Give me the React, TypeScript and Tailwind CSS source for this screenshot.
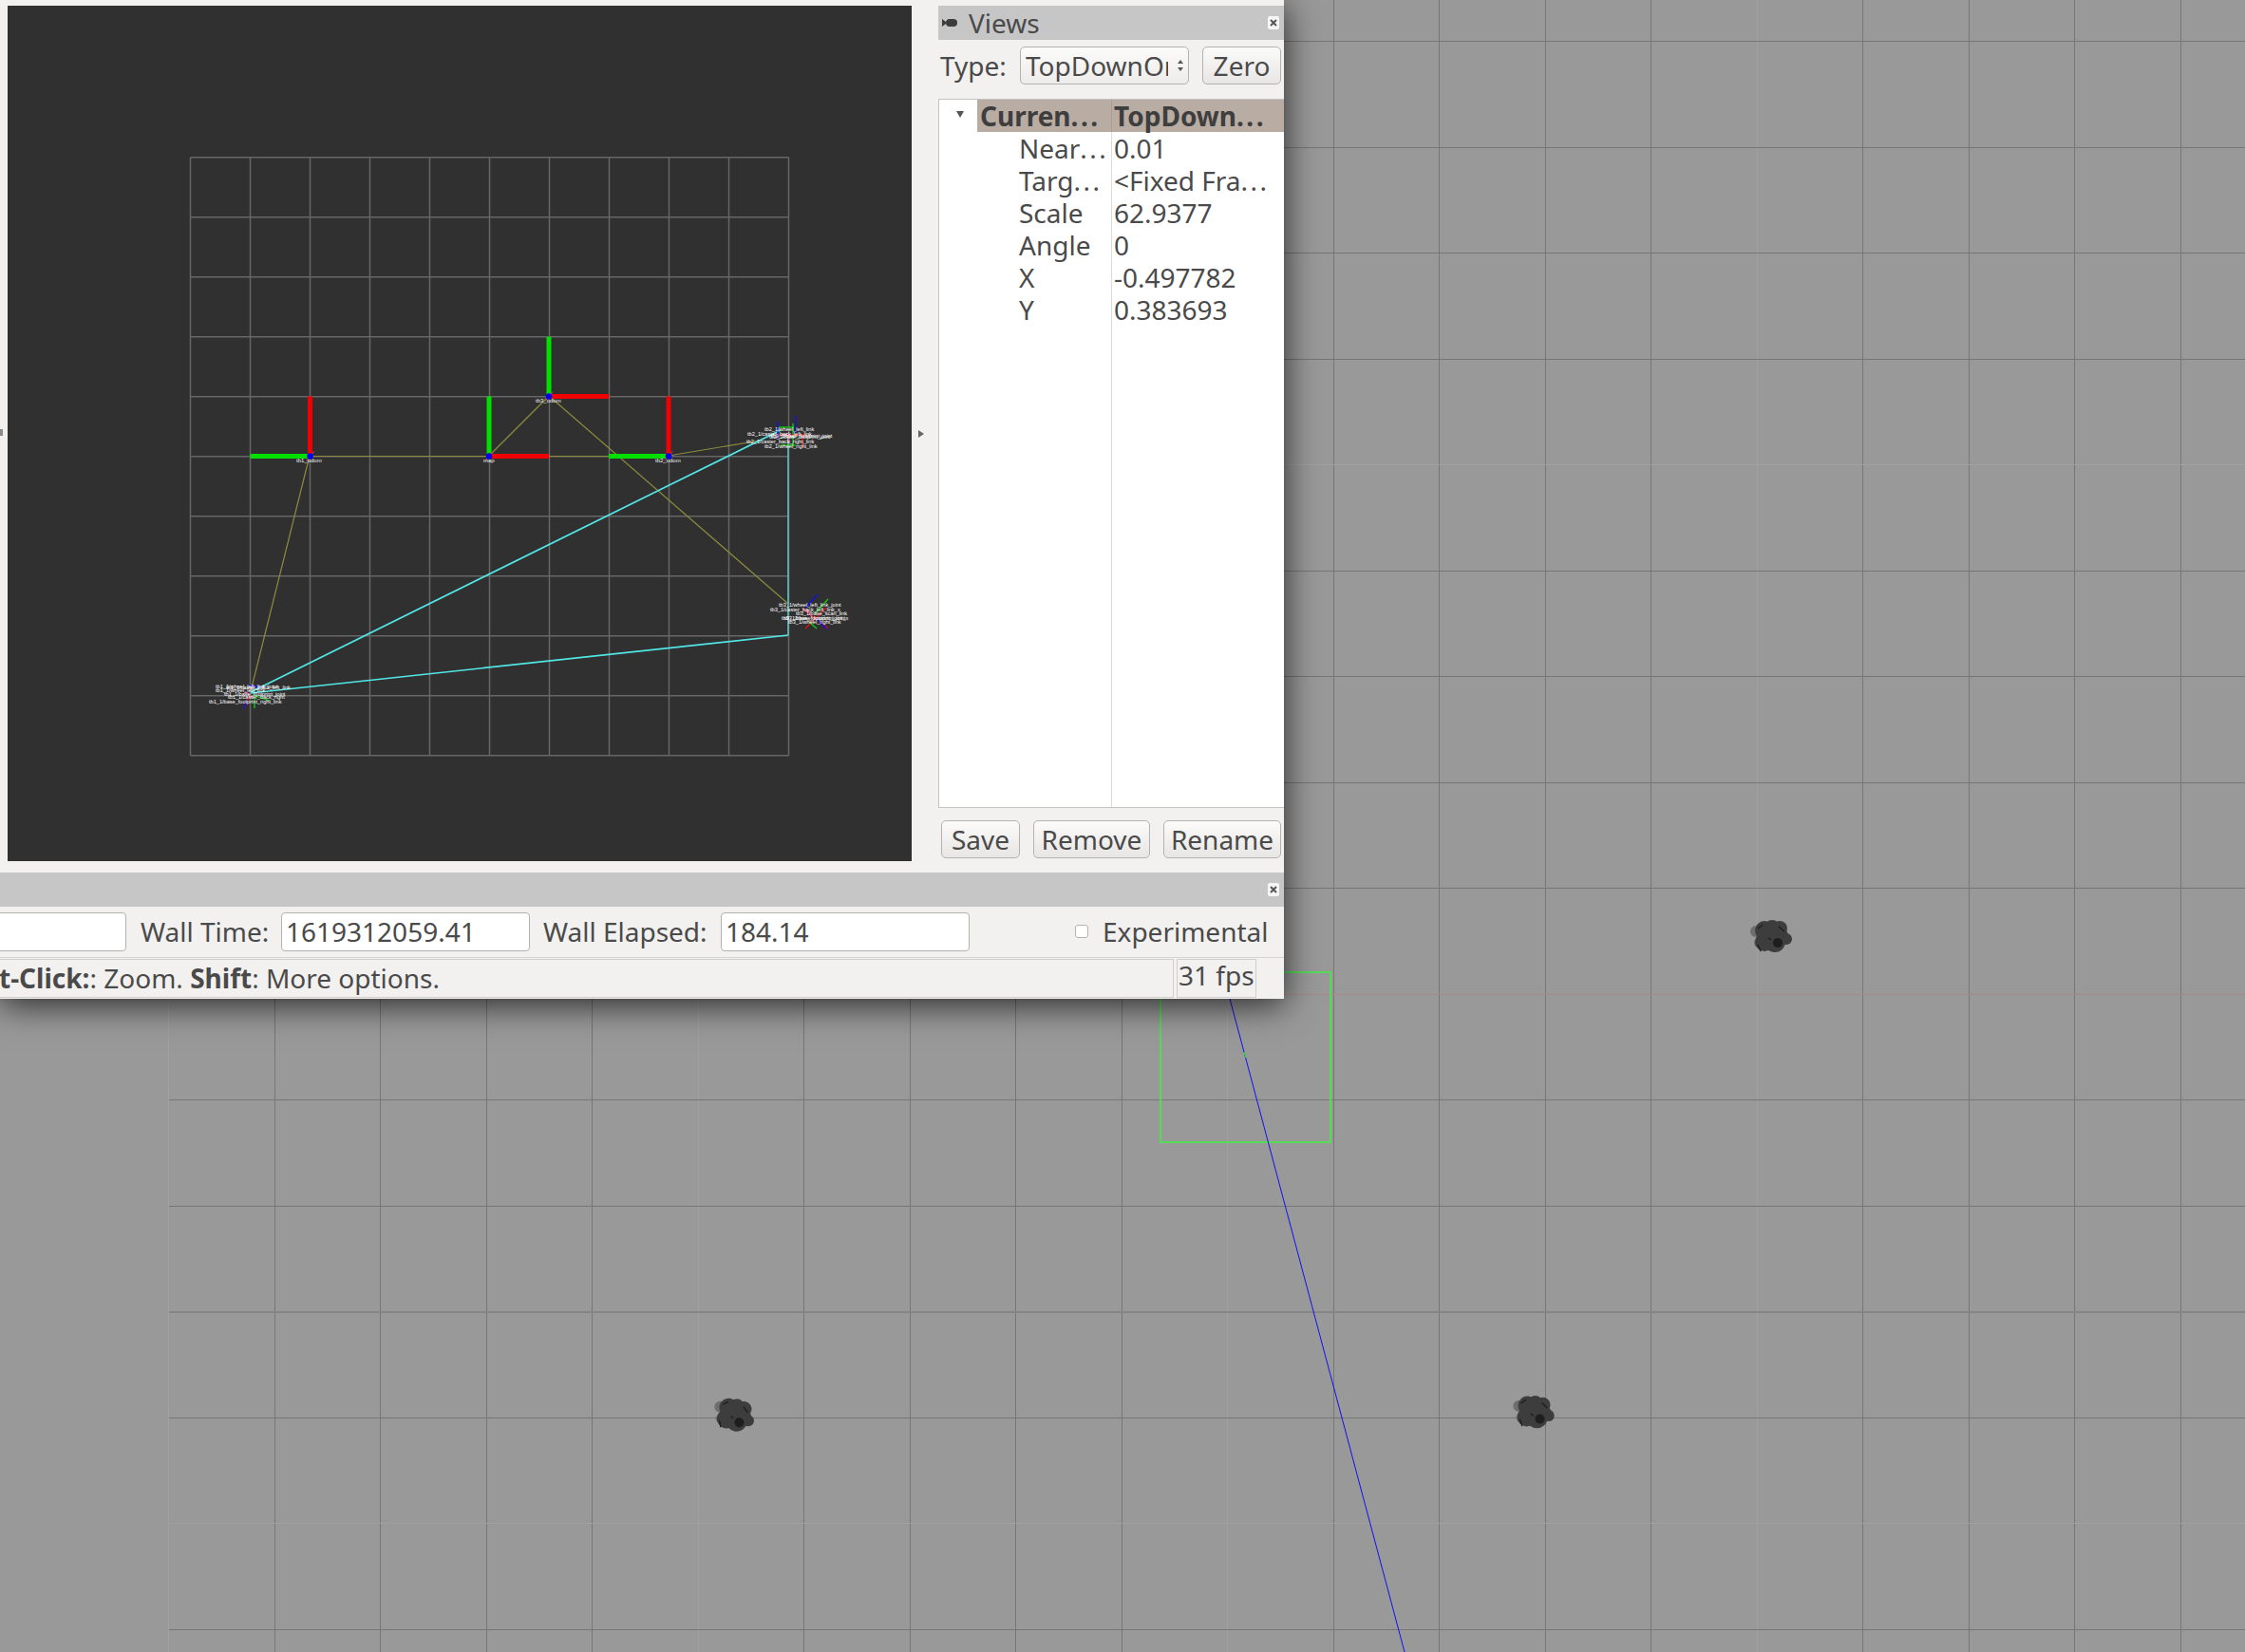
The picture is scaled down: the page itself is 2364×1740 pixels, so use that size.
const sceneCols = Array.from({ length: 20 }, (_, i) => 177.5 + i * 111.5)
const sceneRows = Array.from({ length: 16 }, (_, i) => 43.5 + i * 111.5)
const viewGrid = Array.from({ length: 11 }, (_, i) => i * 63)

function Robot({ x, y, r = 0 }: { x: number; y: number; r?: number }) {
  return (
    <g transform={`translate(${x} ${y}) rotate(${r})`}>
      <g fill="#6e6e6e">
        <circle cx={-16} cy={-5} r={6} />
        <circle cx={-13} cy={7} r={5} />
      </g>
      <g fill="#3d3d3d">
        <circle cx={-7} cy={-6} r={10} />
        <circle cx={1} cy={-9} r={8} />
        <circle cx={9} cy={-8} r={8} />
        <circle cx={12} cy={-1} r={6} />
        <circle cx={16} cy={3} r={6} />
        <circle cx={-7} cy={6} r={10} />
        <circle cx={4} cy={6} r={11} />
      </g>
      <circle cx={7} cy={7} r={5} fill="#1e1e1e" />
      <path d="M-14 -8 l5 -4 M8 -10 l6 5 M-14 9 l3 7 M-3 2 l3 2" stroke="#1e1e1e" strokeWidth={1.3} fill="none" />
    </g>
  )
}

function Scene() {
  return (
    <svg className="absolute inset-0" width={2364} height={1740}>
      <g shapeRendering="crispEdges" strokeWidth={1}>
        {sceneCols.map((x, i) => (
          <line key={x} x1={x} y1={0} x2={x} y2={1740} stroke={i % 5 === 0 ? '#a0a0a0' : '#767676'} />
        ))}
        {sceneRows.map((y) => (
          <line
            key={y}
            x1={177.5}
            y1={y}
            x2={2364}
            y2={y}
            stroke={y === 1604.5 || y === 489.5 ? '#a0a0a0' : y === 1047 ? '#a68a8a' : y === 1381.5 ? '#858585' : '#767676'}
            strokeWidth={y === 1381.5 ? 2 : 1}
          />
        ))}
        <rect x={1222} y={1024} width={179} height={179} fill="none" stroke="#55dc55" strokeWidth={2} />
      </g>
      <line x1={1295} y1={1052} x2={1479} y2={1740} stroke="#1010f0" strokeWidth={1} />
      <line x1={1310} y1={1108} x2={1312} y2={1114} stroke="#30e030" strokeWidth={1.2} />
      <Robot x={1865} y={986} />
      <Robot x={773} y={1490} r={12} />
      <Robot x={1615} y={1487} r={4} />
    </svg>
  )
}

function Frame({ x, y, g, r, label, lx }: { x: number; y: number; g: [number, number]; r: [number, number]; label: string; lx: number }) {
  return (
    <g>
      <line x1={x} y1={y} x2={g[0]} y2={g[1]} stroke="#00e000" strokeWidth={5} />
      <line x1={x} y1={y} x2={r[0]} y2={r[1]} stroke="#f00000" strokeWidth={5} />
      <line x1={x - 4} y1={y + 5} x2={x + 4} y2={y - 5} stroke="#d83a8a" strokeWidth={1} />
      <circle cx={x} cy={y} r={3.2} fill="#0000f0" />
      <text x={lx} y={y + 6} fontSize={6} fill="#f0f0f0" fontFamily="'Liberation Sans', sans-serif">
        {label}
      </text>
    </g>
  )
}

type Seg = [number, number, number, number, string]

function Cluster({ lines, labels }: { lines: Seg[]; labels: [number, number, string][] }) {
  return (
    <g>
      {lines.map(([a, b, c, d, col], i) => (
        <line key={i} x1={a} y1={b} x2={c} y2={d} stroke={col} strokeWidth={1.3} />
      ))}
      {labels.map(([x, y, t], i) => (
        <text key={i} x={x} y={y} fontSize={5.6} fill="#ffffff" fontFamily="'Liberation Sans', sans-serif">
          {t}
        </text>
      ))}
    </g>
  )
}

function RobotView() {
  return (
    <svg className="block" width={952} height={901} viewBox="8 6 952 901">
      <g stroke="#666666" strokeWidth={1.5}>
        {viewGrid.map((d) => (
          <line key={`v${d}`} x1={200.5 + d} y1={165.7} x2={200.5 + d} y2={795.7} />
        ))}
        {viewGrid.map((d) => (
          <line key={`h${d}`} x1={200.5} y1={165.7 + d} x2={830.5} y2={165.7 + d} />
        ))}
      </g>

      {/* tf links */}
      <g stroke="#8c8c3e" strokeWidth={1.2} fill="none">
        <line x1={326} y1={480.5} x2={704} y2={480.5} />
        <line x1={515} y1={480} x2={578} y2={417} />
        <line x1={578} y1={417} x2={830} y2={636} />
        <line x1={326} y1={480} x2={264} y2={728} />
        <line x1={704} y1={480} x2={800} y2={464} />
      </g>
      <line x1={264} y1={729} x2={822} y2={453} stroke="#52e6e6" strokeWidth={1.7} />
      <line x1={264} y1={730} x2={830} y2={669} stroke="#52e6e6" strokeWidth={1.7} />
      <line x1={830} y1={462} x2={830} y2={669} stroke="#5fb4b4" strokeWidth={1.8} />

      <Frame x={326.5} y={480.5} g={[263.5, 480.5]} r={[326.5, 417.5]} label="tb1_odom" lx={312} />
      <Frame x={515} y={480.5} g={[515, 417.5]} r={[578, 480.5]} label="map" lx={509} />
      <Frame x={578} y={417.5} g={[578, 354.7]} r={[641, 417.5]} label="tb3_odom" lx={564} />
      <Frame x={704} y={480.5} g={[641, 480.5]} r={[704, 417.5]} label="tb2_odom" lx={690} />

      <Cluster
        lines={[
          [838, 438, 838, 456, '#1010f0'],
          [819, 444, 819, 462, '#1010f0'],
          [835, 446, 835, 470, '#10d010'],
          [820, 450, 836, 450, '#10d010'],
          [822, 469, 838, 469, '#10d010'],
          [820, 458, 850, 458, '#e01010'],
          [845, 458, 845, 472, '#e01010'],
          [828, 456, 832, 466, '#d83a8a'],
        ]}
        labels={[
          [805, 454, 'tb2_1/wheel_left_link'],
          [787, 459, 'tb2_1/caster_back_left_link'],
          [810, 462, 'tb2_1/base_footprint_joint'],
          [812, 461, 'tb2_1/base_footprint_joint'],
          [786, 467, 'tb2_1/caster_back_right_link'],
          [805, 472, 'tb2_1/wheel_right_link'],
        ]}
      />
      <Cluster
        lines={[
          [848, 640, 861, 626, '#1010f0'],
          [858, 646, 872, 631, '#10d010'],
          [845, 641, 872, 662, '#e01010'],
          [870, 640, 848, 662, '#e01010'],
          [860, 652, 871, 663, '#1010f0'],
          [852, 655, 860, 662, '#10d010'],
          [850, 642, 856, 652, '#d83a8a'],
        ]}
        labels={[
          [820, 639, 'tb3_1/wheel_left_link_joint'],
          [811, 644, 'tb3_1/caster_back_left_link_x'],
          [838, 648, 'tb3_1/base_scan_link'],
          [823, 653, 'tb3_1/base_footprint_joint_x'],
          [826, 653, 'tb3_1/base_footprint_joint'],
          [830, 657, 'tb3_1/wheel_right_link'],
        ]}
      />
      <Cluster
        lines={[
          [263, 732, 256, 747, '#e01010'],
          [260, 738, 256, 747, '#1010f0'],
          [268, 734, 268, 746, '#10d010'],
          [262, 722, 276, 724, '#1010f0'],
          [266, 732, 284, 738, '#10d010'],
          [258, 728, 266, 736, '#d83a8a'],
        ]}
        labels={[
          [227, 725, 'tb1_1/wheel_left_link_joint'],
          [238, 726, 'tb1_1/caster_back_left_link'],
          [227, 729, 'tb1_1/wheel_left_link'],
          [236, 733, 'tb1_1/base_footprint_joint'],
          [240, 736, 'tb1_1/caster_back_right'],
          [220, 741, 'tb1_1/base_footprint_right_link'],
        ]}
      />
    </svg>
  )
}

function Button({ label, className }: { label: string; className: string }) {
  return (
    <div
      className={`flex h-[40px] items-center justify-center rounded-[5px] border border-[#b4b2af] bg-gradient-to-b from-[#fbfbfa] to-[#e8e6e4] ${className}`}
    >
      {label}
    </div>
  )
}

function CloseBox() {
  return (
    <div className="flex h-[14px] w-[12px] items-center justify-center rounded-[2px] bg-[#f6f6f6]">
      <svg width={8} height={8} viewBox="0 0 8 8">
        <path d="M1 1 L7 7 M7 1 L1 7" stroke="#555" strokeWidth={2} />
      </svg>
    </div>
  )
}

function Field({ value, className }: { value: string; className: string }) {
  return (
    <div className={`flex h-[41px] items-center rounded-[4px] border border-[#b4b2af] bg-white pl-[4px] ${className}`}>
      {value}
    </div>
  )
}

// Qt spaces its elision dots wider than the font's ellipsis
function Elided({ text }: { text: string }) {
  return (
    <>
      {text}
      <span className="tracking-[2.5px]">...</span>
    </>
  )
}

const props = [
  { name: 'Near', elided: true, value: '0.01' },
  { name: 'Targ', elided: true, value: '<Fixed Fra', valueElided: true },
  { name: 'Scale', value: '62.9377' },
  { name: 'Angle', value: '0' },
  { name: 'X', value: '-0.497782' },
  { name: 'Y', value: '0.383693' },
]

function ViewsPanel() {
  return (
    <div className="flex w-[364px] flex-col">
      <div className="flex h-[36px] items-center bg-[#c6c6c6] pl-[4px] pr-[5px]">
        <svg width={16} height={10} viewBox="0 0 16 10" className="shrink-0">
          <path d="M0 1 L4 4 L4 6 L0 9 Z" fill="#3c3c3c" />
          <rect x={4} y={1} width={12} height={8} rx={4} fill="#3c3c3c" />
        </svg>
        <span className="ml-[12px] flex-1">Views</span>
        <CloseBox />
      </div>

      <div className="mt-[7px] flex h-[40px] items-center pl-[2px]">
        <span className="w-[84px]">Type:</span>
        <div className="flex h-[40px] w-[178px] items-center rounded-[5px] border border-[#b4b2af] bg-gradient-to-b from-[#fbfbfa] to-[#eeecea] pl-[5px]">
          <span className="w-[150px] overflow-hidden whitespace-nowrap">TopDownOrtho</span>
          <svg width={10} height={16} viewBox="0 0 10 16" className="ml-[8px]">
            <path d="M5 2 L8 6 L2 6 Z M5 14 L8 10 L2 10 Z" fill="#555" />
          </svg>
        </div>
        <Button label="Zero" className="ml-[14px] w-[83px]" />
      </div>

      <div className="mt-[15px] flex h-[747px] flex-col border border-r-0 border-[#c4c2c0] bg-white">
        <div className="flex h-[34px] font-bold text-[#3e3e3e]">
          <div className="flex w-[40px] items-start justify-center pl-[3px] pt-[12px]">
            <svg width={8} height={7} viewBox="0 0 8 7">
              <path d="M0 0 L8 0 L4 7 Z" fill="#555" />
            </svg>
          </div>
          <div className="w-[142px] whitespace-nowrap border-r border-[#a99d94] bg-[#b8aca3] pl-[3px] leading-[34px]">
            <Elided text="Curren" />
          </div>
          <div className="flex-1 whitespace-nowrap bg-[#b8aca3] pl-[2px] leading-[34px]">
            <Elided text="TopDown" />
          </div>
        </div>
        <div className="flex flex-1">
          <div className="w-[182px] border-r border-[#dcdcdc] pl-[84px]">
            {props.map((p) => (
              <div key={p.name} className="h-[34px] whitespace-nowrap leading-[34px]">
                {p.elided ? <Elided text={p.name} /> : p.name}
              </div>
            ))}
          </div>
          <div className="flex-1 pl-[2px]">
            {props.map((p) => (
              <div key={p.name} className="h-[34px] whitespace-nowrap leading-[34px]">
                {p.valueElided ? <Elided text={p.value} /> : p.value}
              </div>
            ))}
          </div>
        </div>
      </div>

      <div className="mt-[13px] flex pl-[3px]">
        <Button label="Save" className="w-[83px]" />
        <Button label="Remove" className="ml-[14px] w-[123px]" />
        <Button label="Rename" className="ml-[14px] w-[124px]" />
      </div>
    </div>
  )
}

export default function App() {
  return (
    <div className="relative h-[1740px] w-[2364px] overflow-hidden bg-[#999999] font-['Noto_Sans',sans-serif] text-[28px] leading-[34px] text-[#4a4a4a]">
      <Scene />

      {/* rviz window */}
      <div className="absolute left-0 top-0 flex h-[1052px] w-[1352px] flex-col bg-[#f2f1f0] shadow-[0_6px_34px_rgba(0,0,0,0.75)]">
        <div className="relative flex h-[919px] pt-[6px]">
          <div className="ml-[8px] h-[901px] w-[952px] bg-[#303030]">
            <RobotView />
          </div>
          <div className="flex h-[901px] w-[28px] items-center justify-center pr-[8px]">
            <svg width={6} height={8} viewBox="0 0 6 8">
              <path d="M0 0 L6 4 L0 8 Z" fill="#666" />
            </svg>
          </div>
          <ViewsPanel />
          <div className="absolute left-0 top-[452px] h-[7px] w-[3px] bg-[#8a8a8a]" />
        </div>

        <div className="flex h-[36px] items-center justify-end bg-[#c6c6c6] pr-[5px]">
          <CloseBox />
        </div>

        <div className="flex h-[53px] items-center pb-[1px]">
          <Field value="" className="-ml-[10px] w-[143px]" />
          <span className="ml-[15px] w-[148px] whitespace-nowrap">Wall Time:</span>
          <Field value="1619312059.41" className="w-[262px]" />
          <span className="ml-[14px] w-[187px] whitespace-nowrap">Wall Elapsed:</span>
          <Field value="184.14" className="w-[262px]" />
          <div className="ml-[111px] h-[14px] w-[14px] rounded-[3px] border border-[#b4b2af] bg-white" />
          <span className="ml-[15px] whitespace-nowrap">Experimental</span>
        </div>

        <div className="flex flex-1 border-t border-[#d4d3d1] pt-[1px]">
          <div className="h-[41px] w-[1236px] overflow-hidden whitespace-nowrap border border-l-0 border-[#cfcecc] leading-[38px]">
            <b className="-ml-[1px] font-bold">t-Click:</b>: Zoom. <b className="font-bold">Shift</b>: More options.
          </div>
          <div className="ml-[3px] h-[41px] w-[84px] whitespace-nowrap border border-[#cfcecc] pl-[1px] leading-[32px]">
            31 fps
          </div>
        </div>
      </div>
    </div>
  )
}
